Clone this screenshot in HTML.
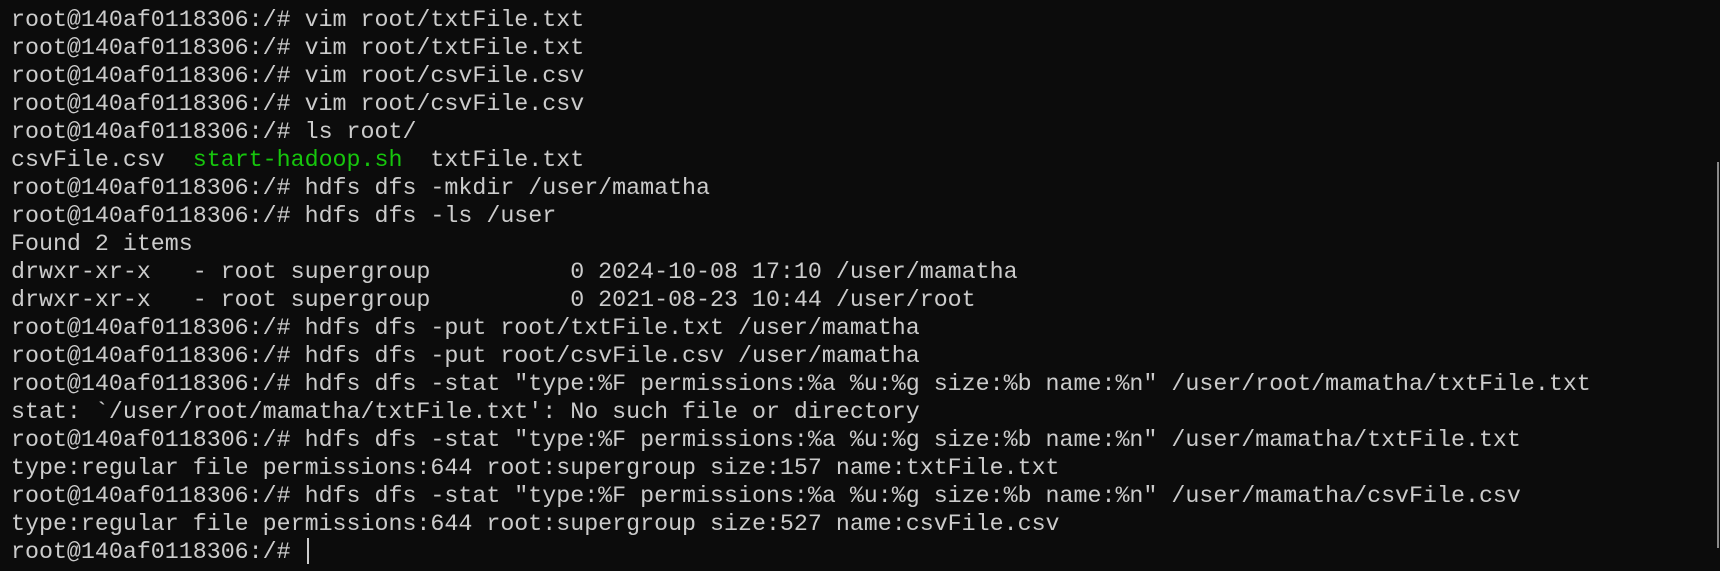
<!DOCTYPE html>
<html><head><meta charset="utf-8"><style>
html,body{margin:0;padding:0;width:1720px;height:571px;background:#0c0c0c;overflow:hidden}
pre{position:absolute;left:11px;top:6px;margin:0;font-family:"Liberation Mono",monospace;font-size:23.3px;line-height:28px;color:#cccccc;white-space:pre}
.g{color:#16c60c}
.cur{display:inline-block;width:2px;height:26px;background:#cccccc;vertical-align:-6px;margin-left:2px}
.sb{position:absolute;left:1717px;top:162px;width:2px;height:386px;background:#8a8a8a}
</style></head><body>
<pre>root@140af0118306:/# vim root/txtFile.txt
root@140af0118306:/# vim root/txtFile.txt
root@140af0118306:/# vim root/csvFile.csv
root@140af0118306:/# vim root/csvFile.csv
root@140af0118306:/# ls root/
csvFile.csv  <span class="g">start-hadoop.sh</span>  txtFile.txt
root@140af0118306:/# hdfs dfs -mkdir /user/mamatha
root@140af0118306:/# hdfs dfs -ls /user
Found 2 items
drwxr-xr-x   - root supergroup          0 2024-10-08 17:10 /user/mamatha
drwxr-xr-x   - root supergroup          0 2021-08-23 10:44 /user/root
root@140af0118306:/# hdfs dfs -put root/txtFile.txt /user/mamatha
root@140af0118306:/# hdfs dfs -put root/csvFile.csv /user/mamatha
root@140af0118306:/# hdfs dfs -stat "type:%F permissions:%a %u:%g size:%b name:%n" /user/root/mamatha/txtFile.txt
stat: `/user/root/mamatha/txtFile.txt': No such file or directory
root@140af0118306:/# hdfs dfs -stat "type:%F permissions:%a %u:%g size:%b name:%n" /user/mamatha/txtFile.txt
type:regular file permissions:644 root:supergroup size:157 name:txtFile.txt
root@140af0118306:/# hdfs dfs -stat "type:%F permissions:%a %u:%g size:%b name:%n" /user/mamatha/csvFile.csv
type:regular file permissions:644 root:supergroup size:527 name:csvFile.csv
root@140af0118306:/# <span class="cur"></span></pre>
<div class="sb"></div>
</body></html>
